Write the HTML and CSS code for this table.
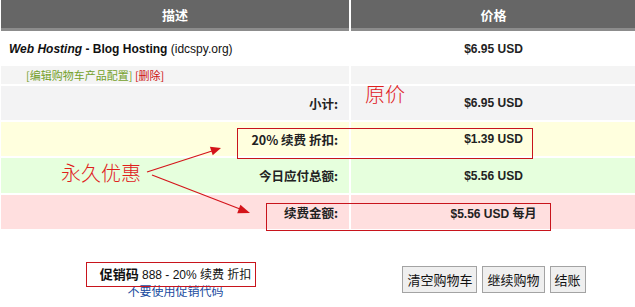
FILE: index.html
```html
<!DOCTYPE html>
<html lang="zh">
<head>
<meta charset="utf-8">
<title>购物车</title>
<link rel="stylesheet" href="styles.css">
</head>
<body>
<div class="page">
  <table class="cart">
    <thead>
      <tr><th>描述</th><th>价格</th></tr>
    </thead>
    <tbody>
      <tr class="row-item">
        <td class="desc"><b><i>Web Hosting</i> - Blog Hosting</b> (idcspy.org)</td>
        <td class="price">$6.95 USD</td>
      </tr>
      <tr class="row-links">
        <td class="links"><a class="edit" href="#">[编辑购物车产品配置]</a> <a class="del" href="#">[删除]</a></td>
        <td></td>
      </tr>
      <tr class="row-sub">
        <td class="label">小计:</td>
        <td class="price">$6.95 USD</td>
      </tr>
      <tr class="row-disc">
        <td class="label">20% 续费 折扣:</td>
        <td class="price">$1.39 USD</td>
      </tr>
      <tr class="row-total">
        <td class="label">今日应付总额:</td>
        <td class="price">$5.56 USD</td>
      </tr>
      <tr class="row-recur">
        <td class="label">续费金额:</td>
        <td class="price">$5.56 USD 每月</td>
      </tr>
    </tbody>
  </table>

  <div class="footer">
    <div class="promo">
      <div class="promo-line"><b>促销码</b> 888 - 20% 续费 折扣</div>
      <a class="promo-remove" href="#">不要使用促销代码</a>
    </div>
    <div class="actions">
      <button class="btn">清空购物车</button>
      <button class="btn">继续购物</button>
      <button class="btn">结账</button>
    </div>
  </div>

  <div class="mark mark-disc"></div>
  <div class="mark mark-recur"></div>
  <div class="mark mark-promo"></div>
  <div class="note note-orig">原价</div>
  <div class="note note-forever">永久优惠</div>
  <svg class="arrows" width="635" height="307" viewBox="0 0 635 307">
    <line x1="147" y1="172" x2="212" y2="151" stroke="#d4141a" stroke-width="1.2"/>
    <polygon points="221,148 212.7,155.2 209.9,146.7" fill="#d4141a"/>
    <line x1="152" y1="175" x2="240" y2="209" stroke="#d4141a" stroke-width="1.2"/>
    <polygon points="250,213 237.2,213.2 240.4,204.8" fill="#d4141a"/>
  </svg>
</div>
</body>
</html>
```

FILE: styles.css
```css
body {
  margin: 0;
  background: #fff;
  color: #222;
  font-family: "Liberation Sans", Arial, "Noto Sans CJK SC", sans-serif;
  font-size: 12px;
  overflow: hidden;
}

.page {
  position: relative;
  width: 635px;
  height: 307px;
  overflow: hidden;
}

.cart {
  border-collapse: separate;
  border-spacing: 2px;
  margin: -2px 0 0 -1px;
  width: 639px;
  table-layout: fixed;
}

.cart th {
  background: #666;
  color: #fff;
  font: bold 13px "Noto Sans CJK SC", sans-serif;
  height: 28px;
  padding: 0;
  border-bottom: 3px solid #8c8c8c;
  text-align: center;
}

.cart th:first-child { width: 348px; }

.cart td { padding: 0; }

.row-item td { background: #fff; height: 31px; }
.row-links td { background: #f4f4f4; height: 18px; }
.row-sub td { background: #f3f3f4; height: 34px; }
.row-disc td { background: #ffffde; height: 34px; }
.row-total td { background: #e6ffdd; height: 35px; }
.row-recur td { background: #ffdfdf; height: 34px; }

.desc {
  padding-left: 8px !important;
  font-size: 12px;
  color: #111;
}

.links {
  padding-left: 25px !important;
  font-size: 11px;
  font-family: "Noto Sans CJK SC", sans-serif;
}

.links a { text-decoration: none; }
.links .edit { color: #73a02a; }
.links .del { color: #cc1111; }

.label {
  text-align: right;
  padding-right: 11px !important;
  font: bold 12.5px "Noto Sans CJK SC", sans-serif;
  color: #222;
}

.price {
  text-align: center;
  font: bold 12px "Liberation Sans", Arial, "Noto Sans CJK SC", sans-serif;
  color: #222;
}

.footer {
  display: flex;
}

.promo {
  width: 349px;
  margin-left: 1px;
  padding-top: 33px;
  text-align: center;
  font-family: "Liberation Sans", Arial, "Noto Sans CJK SC", sans-serif;
}

.promo-line {
  font-size: 12px;
  line-height: 17px;
  color: #111;
}

.promo-line b {
  font: bold 13px "Noto Sans CJK SC", sans-serif;
}

.promo-remove {
  display: block;
  font-size: 12px;
  line-height: 17px;
  color: #1a4b9e;
  text-decoration: none;
}

.actions {
  flex: 1;
  display: flex;
  justify-content: center;
  align-items: flex-start;
  gap: 5px;
  padding-top: 35px;
  padding-left: 3px;
}

.btn {
  font: 13px "Noto Sans CJK SC", sans-serif;
  color: #111;
  background: #efefef;
  border: 1px solid #a3a3a3;
  border-radius: 0;
  height: 27px;
  padding: 0 4px;
}

.mark {
  position: absolute;
  border: 1px solid #c8141c;
}

.mark-disc { left: 237px; top: 128px; width: 294px; height: 29px; }
.mark-recur { left: 266px; top: 203px; width: 283px; height: 26px; }
.mark-promo { left: 86px; top: 262px; width: 168px; height: 23px; }

.note {
  position: absolute;
  color: #e0201c;
  font: 300 20px/20px "Noto Sans CJK SC", sans-serif;
}

.note-orig { left: 365px; top: 84px; }
.note-forever { left: 61px; top: 163px; }

.arrows {
  position: absolute;
  left: 0;
  top: 0;
  pointer-events: none;
}
```
